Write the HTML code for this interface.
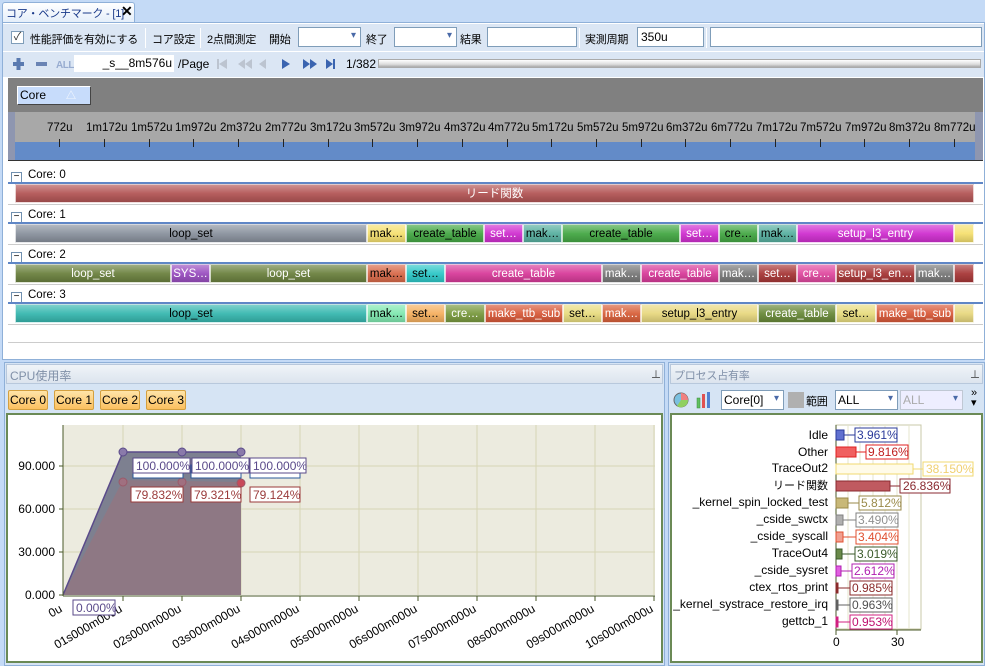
<!DOCTYPE html>
<html><head><meta charset="utf-8"><style>
*{box-sizing:border-box;margin:0;padding:0}
body{width:985px;height:666px;overflow:hidden;background:#c4daf6;font-family:"Liberation Sans","Noto Sans CJK JP",sans-serif;font-size:12px;color:#000;position:relative}
.a{position:absolute}
.j{font-size:11px;letter-spacing:-0.2px}
.bar{position:absolute;height:19px;line-height:19px;text-align:center;font-size:11.5px;overflow:hidden;white-space:nowrap;border:1px solid rgba(255,255,255,.7);background-image:linear-gradient(rgba(255,255,255,.35),rgba(255,255,255,.05) 50%,rgba(0,0,0,.15))}
.w{color:#fff}
.cb{position:absolute;height:20px;background:#fff;border:1px solid #7f9db9}
.cb:after{content:"▾";position:absolute;right:4px;top:2px;font-size:10px;color:#4a6aa8}
.sep{position:absolute;width:1px;background:#a8c0e0;border-right:1px solid #fff}
.ti{position:absolute;top:122px;font-size:11.5px}
.tk{position:absolute;top:139px;width:1px;height:8px;background:#222}
.cl{position:absolute;left:11px;font-size:11.5px}
.cl b{display:inline-block;width:11px;height:11px;border:1px solid #7090b0;background:#fff;font-weight:normal;font-size:10px;line-height:8px;text-align:center;margin-right:6px;vertical-align:-1px}
.hl{position:absolute;left:8px;width:975px;height:2px;background:#5f86c6}
.gl{position:absolute;left:8px;width:975px;height:1px;background:#ccc}
.core{position:absolute;top:390px;width:40px;height:20px;line-height:18px;text-align:center;border:1px solid #d4a040;background:linear-gradient(#ffe4a8,#fbc060);border-radius:2px;font-size:12px}
</style></head><body>
<!-- tab -->
<div class="a" style="left:2px;top:2px;width:133px;height:21px;background:linear-gradient(#fff,#e4eefa);border:1px solid #8fb0d8;border-bottom:none;border-radius:3px 3px 0 0;"></div>
<div class="a j" style="left:6px;top:5px;color:#1a3a8a;white-space:nowrap">コア・ベンチマーク - [1]</div>
<div class="a" style="left:121px;top:3px;font-size:14px;font-weight:bold">✕</div>
<!-- main frame -->
<div class="a" style="left:2px;top:22px;width:983px;height:338px;background:#fff;border:1px solid #8fb0d8"></div>
<!-- toolbar1 -->
<div class="a" style="left:3px;top:24px;width:981px;height:27px;background:#dbe6f4"></div>
<div class="a" style="left:11px;top:31px;width:13px;height:13px;border:1px solid #7f9db9;background:#fff;font-size:11px;line-height:11px;text-align:center;color:#333">✓</div>
<div class="a j" style="left:30px;top:31px">性能評価を有効にする</div>
<div class="sep" style="left:145px;top:28px;height:20px"></div>
<div class="a j" style="left:152px;top:31px">コア設定</div>
<div class="sep" style="left:200px;top:28px;height:20px"></div>
<div class="a j" style="left:207px;top:31px">2点間測定</div>
<div class="a j" style="left:269px;top:31px">開始</div>
<div class="cb" style="left:298px;top:27px;width:63px"></div>
<div class="a j" style="left:366px;top:31px">終了</div>
<div class="cb" style="left:394px;top:27px;width:63px"></div>
<div class="a j" style="left:460px;top:31px">結果</div>
<div class="a" style="left:487px;top:27px;width:90px;height:20px;background:#fff;border:1px solid #7f9db9"></div>
<div class="sep" style="left:579px;top:28px;height:20px"></div>
<div class="a j" style="left:585px;top:31px">実測周期</div>
<div class="a" style="left:637px;top:27px;width:67px;height:20px;background:#fff;border:1px solid #7f9db9;padding:2px 3px;font-size:12px">350u</div>
<div class="sep" style="left:706px;top:28px;height:20px"></div>
<div class="a" style="left:710px;top:27px;width:272px;height:20px;background:#fff;border:1px solid #7f9db9"></div>
<!-- toolbar2 -->
<div class="a" style="left:3px;top:51px;width:981px;height:26px;background:#dbe6f4;border-top:1px solid #fff"></div>
<svg class="a" style="left:10px;top:55px" width="370" height="18">
<rect x="3" y="7" width="11" height="4" fill="#5a7ab0"/><rect x="6.5" y="3" width="4" height="12" fill="#5a7ab0"/>
<rect x="26" y="7" width="11" height="4" fill="#6a84b4"/>
<text x="46" y="13" font-family="Liberation Sans" font-size="10" font-weight="bold" fill="#98acd0" letter-spacing="-0.5">ALL</text>
<g fill="#bcc4d0"><rect x="207" y="4" width="2" height="10"/><path d="M217 4 L209 9 L217 14Z"/><path d="M235 4 L228 9 L235 14Z M242 4 L235 9 L242 14Z"/><path d="M256 4 L249 9 L256 14Z"/></g>
<g fill="#3a64b0"><path d="M272 4 L280 9 L272 14Z"/><path d="M293 4 L300 9 L293 14Z M300 4 L307 9 L300 14Z"/><path d="M316 4 L323 9 L316 14Z"/><rect x="323" y="4" width="2" height="10"/></g>
</svg>
<div class="a" style="left:74px;top:55px;width:100px;height:17px;background:#fff;text-align:right;font-size:12px;line-height:17px;padding-right:2px">_s__8m576u</div>
<div class="a" style="left:178px;top:57px;font-size:12px">/Page</div>
<div class="a" style="left:346px;top:57px;font-size:12px">1/382</div>
<div class="a" style="left:378px;top:59px;width:603px;height:9px;border:1px solid #aaa;background:linear-gradient(#fff,#ddd 60%,#aaa)"></div>
<!-- timeline header -->
<div class="a" style="left:8px;top:78px;width:975px;height:34px;background:#808080"></div>
<div class="a" style="left:17px;top:86px;width:74px;height:19px;background:#c7dcfb;border:1px solid #fff;border-right-color:#444;border-bottom-color:#444;padding-left:2px;line-height:16px;font-size:12px">Core<span style="margin-left:20px;color:#fff;font-size:10px">△</span></div>
<div class="a" style="left:8px;top:112px;width:975px;height:48px;background:#8e96b0"></div>
<div class="a" style="left:15px;top:112px;width:960px;height:30px;background:#a8a8a8"></div>
<div class="a" style="left:15px;top:142px;width:960px;height:18px;background:#638bc8"></div>
<div class="a" style="left:8px;top:160px;width:975px;height:1px;background:#333"></div>
<div class="ti" style="left:47px">772u</div>
<div class="ti" style="left:86px">1m172u</div>
<div class="ti" style="left:131px">1m572u</div>
<div class="ti" style="left:175px">1m972u</div>
<div class="ti" style="left:220px">2m372u</div>
<div class="ti" style="left:265px">2m772u</div>
<div class="ti" style="left:310px">3m172u</div>
<div class="ti" style="left:354px">3m572u</div>
<div class="ti" style="left:399px">3m972u</div>
<div class="ti" style="left:444px">4m372u</div>
<div class="ti" style="left:488px">4m772u</div>
<div class="ti" style="left:532px">5m172u</div>
<div class="ti" style="left:577px">5m572u</div>
<div class="ti" style="left:622px">5m972u</div>
<div class="ti" style="left:666px">6m372u</div>
<div class="ti" style="left:711px">6m772u</div>
<div class="ti" style="left:756px">7m172u</div>
<div class="ti" style="left:800px">7m572u</div>
<div class="ti" style="left:845px">7m972u</div>
<div class="ti" style="left:889px">8m372u</div>
<div class="ti" style="left:934px">8m772u</div>
<div class="tk" style="left:59px"></div><div class="tk" style="left:104px"></div><div class="tk" style="left:149px"></div><div class="tk" style="left:193px"></div><div class="tk" style="left:238px"></div><div class="tk" style="left:283px"></div><div class="tk" style="left:328px"></div><div class="tk" style="left:372px"></div><div class="tk" style="left:417px"></div><div class="tk" style="left:462px"></div><div class="tk" style="left:507px"></div><div class="tk" style="left:551px"></div><div class="tk" style="left:596px"></div><div class="tk" style="left:641px"></div><div class="tk" style="left:685px"></div><div class="tk" style="left:730px"></div><div class="tk" style="left:775px"></div><div class="tk" style="left:820px"></div><div class="tk" style="left:864px"></div><div class="tk" style="left:909px"></div><div class="tk" style="left:954px"></div>
<!-- rows -->
<div class="cl" style="top:169px"><b>−</b>Core: 0</div>
<div class="cl" style="top:209px"><b>−</b>Core: 1</div>
<div class="cl" style="top:249px"><b>−</b>Core: 2</div>
<div class="cl" style="top:289px"><b>−</b>Core: 3</div>
<div class="hl" style="top:182px"></div><div class="hl" style="top:222px"></div><div class="hl" style="top:262px"></div><div class="hl" style="top:302px"></div>
<div class="gl" style="top:204px"></div><div class="gl" style="top:244px"></div><div class="gl" style="top:284px"></div><div class="gl" style="top:324px"></div><div class="gl" style="top:342px"></div>
<div class="bar w" style="left:15px;top:184px;width:959px;background-color:#b35656">リード関数</div>
<!-- core1 -->
<div class="bar" style="left:15px;top:224px;width:352px;background-color:#8a929e">loop_set</div>
<div class="bar" style="left:367px;top:224px;width:39px;background-color:#f5e070">mak…</div>
<div class="bar" style="left:406px;top:224px;width:78px;background-color:#45a845">create_table</div>
<div class="bar w" style="left:484px;top:224px;width:39px;background-color:#d030d0">set…</div>
<div class="bar" style="left:523px;top:224px;width:39px;background-color:#58b0a0">mak…</div>
<div class="bar" style="left:562px;top:224px;width:118px;background-color:#45a845">create_table</div>
<div class="bar w" style="left:680px;top:224px;width:39px;background-color:#d030d0">set…</div>
<div class="bar" style="left:719px;top:224px;width:39px;background-color:#45a845">cre…</div>
<div class="bar" style="left:758px;top:224px;width:39px;background-color:#58b0a0">mak…</div>
<div class="bar w" style="left:797px;top:224px;width:157px;background-color:#d030d0">setup_l3_entry</div>
<div class="bar" style="left:954px;top:224px;width:20px;background-color:#f5e070"></div>
<!-- core2 -->
<div class="bar w" style="left:15px;top:264px;width:156px;background-color:#6c8240">loop_set</div>
<div class="bar w" style="left:171px;top:264px;width:39px;background-color:#9a4fc0">SYS…</div>
<div class="bar w" style="left:210px;top:264px;width:157px;background-color:#6c8240">loop_set</div>
<div class="bar" style="left:367px;top:264px;width:39px;background-color:#d86a4a">mak…</div>
<div class="bar" style="left:406px;top:264px;width:39px;background-color:#2ec8c8">set…</div>
<div class="bar w" style="left:445px;top:264px;width:157px;background-color:#d83c9a">create_table</div>
<div class="bar w" style="left:602px;top:264px;width:39px;background-color:#7a7a7a">mak…</div>
<div class="bar w" style="left:641px;top:264px;width:78px;background-color:#d83c9a">create_table</div>
<div class="bar w" style="left:719px;top:264px;width:39px;background-color:#7a7a7a">mak…</div>
<div class="bar w" style="left:758px;top:264px;width:39px;background-color:#a83838">set…</div>
<div class="bar w" style="left:797px;top:264px;width:39px;background-color:#e04aa0">cre…</div>
<div class="bar w" style="left:836px;top:264px;width:79px;background-color:#a83838">setup_l3_en…</div>
<div class="bar w" style="left:915px;top:264px;width:39px;background-color:#7a7a7a">mak…</div>
<div class="bar" style="left:954px;top:264px;width:20px;background-color:#a83838"></div>
<!-- core3 -->
<div class="bar" style="left:15px;top:304px;width:352px;background-color:#38b8b0">loop_set</div>
<div class="bar" style="left:367px;top:304px;width:39px;background-color:#80e8b0">mak…</div>
<div class="bar" style="left:406px;top:304px;width:39px;background-color:#f5b060">set…</div>
<div class="bar w" style="left:445px;top:304px;width:40px;background-color:#7a9a40">cre…</div>
<div class="bar w" style="left:485px;top:304px;width:78px;background-color:#d85a3a">make_ttb_sub</div>
<div class="bar" style="left:563px;top:304px;width:39px;background-color:#e8dc80">set…</div>
<div class="bar w" style="left:602px;top:304px;width:39px;background-color:#d8603a">mak…</div>
<div class="bar" style="left:641px;top:304px;width:117px;background-color:#e8d880">setup_l3_entry</div>
<div class="bar w" style="left:758px;top:304px;width:78px;background-color:#6a8a3a">create_table</div>
<div class="bar" style="left:836px;top:304px;width:40px;background-color:#e8dc80">set…</div>
<div class="bar w" style="left:876px;top:304px;width:78px;background-color:#d85a3a">make_ttb_sub</div>
<div class="bar" style="left:954px;top:304px;width:20px;background-color:#e8d880"></div>

<!-- bottom left panel -->
<div class="a" style="left:4px;top:362px;width:661px;height:304px;background:#d6e4f4;border:1px solid #8fb0d8"></div>
<div class="a" style="left:6px;top:364px;width:657px;height:20px;background:linear-gradient(#f0f4f8,#dce4ee);border:1px solid #b8c8dc;color:#8090a8;padding:2px 3px;font-size:12px">CPU使用率</div>
<div class="a" style="left:651px;top:366px;font-size:10px;color:#333">⊥</div>
<div class="core" style="left:8px">Core 0</div>
<div class="core" style="left:54px">Core 1</div>
<div class="core" style="left:100px">Core 2</div>
<div class="core" style="left:146px">Core 3</div>
<div class="a" style="left:6px;top:413px;width:657px;height:250px;background:#fff;border:2px solid #6b8a56"></div>
<svg class="a" style="left:0;top:0" width="665" height="666" font-family="Liberation Sans, sans-serif" font-size="12">
<rect x="63" y="425" width="592" height="170" fill="#ecebdf"/>
<g stroke="#d6d6b4" stroke-width="1">
<line x1="63" y1="466" x2="655" y2="466"/><line x1="63" y1="509" x2="655" y2="509"/><line x1="63" y1="552" x2="655" y2="552"/>
<line x1="123" y1="425" x2="123" y2="595"/><line x1="182" y1="425" x2="182" y2="595"/><line x1="241" y1="425" x2="241" y2="595"/><line x1="300" y1="425" x2="300" y2="595"/><line x1="359" y1="425" x2="359" y2="595"/><line x1="418" y1="425" x2="418" y2="595"/><line x1="477" y1="425" x2="477" y2="595"/><line x1="536" y1="425" x2="536" y2="595"/><line x1="595" y1="425" x2="595" y2="595"/><line x1="654" y1="425" x2="654" y2="595"/>
</g>
<polygon points="63,595 123,452 241,452 241,595" fill="#7d8090"/>
<polygon points="63,595 123,480 182,481 241,482 241,595" fill="#8e7884"/>
<polyline points="63,595 123,452 241,452" fill="none" stroke="#5a4a8a" stroke-width="1.5"/>
<g fill="#8a7aaa" stroke="#5a4a8a"><circle cx="123" cy="452" r="4"/><circle cx="182" cy="452" r="4"/><circle cx="241" cy="452" r="4"/></g>
<g fill="#a07080" stroke="#9a5a6a"><circle cx="123" cy="482" r="4"/><circle cx="182" cy="482" r="4"/><circle cx="241" cy="483" r="4" fill="#c84a5a"/></g>
<line x1="63" y1="425" x2="63" y2="596" stroke="#4a5a2a"/><line x1="63" y1="596" x2="655" y2="596" stroke="#4a5a2a"/>
<g stroke="#4a5a2a">
<line x1="59" y1="466" x2="63" y2="466"/><line x1="59" y1="509" x2="63" y2="509"/><line x1="59" y1="552" x2="63" y2="552"/><line x1="59" y1="595" x2="63" y2="595"/>
<line x1="123" y1="596" x2="123" y2="601"/><line x1="182" y1="596" x2="182" y2="601"/><line x1="241" y1="596" x2="241" y2="601"/><line x1="300" y1="596" x2="300" y2="601"/><line x1="359" y1="596" x2="359" y2="601"/><line x1="418" y1="596" x2="418" y2="601"/><line x1="477" y1="596" x2="477" y2="601"/><line x1="536" y1="596" x2="536" y2="601"/><line x1="595" y1="596" x2="595" y2="601"/><line x1="654" y1="596" x2="654" y2="601"/>
</g>
<g text-anchor="end" fill="#000"><text x="55" y="470">90.000</text><text x="55" y="513">60.000</text><text x="55" y="556">30.000</text><text x="55" y="599">0.000</text></g>
<g text-anchor="end" fill="#000">
<text transform="translate(63,611) rotate(-30)">0u</text>
<text transform="translate(123,611) rotate(-30)">01s000m000u</text>
<text transform="translate(182,611) rotate(-30)">02s000m000u</text>
<text transform="translate(241,611) rotate(-30)">03s000m000u</text>
<text transform="translate(300,611) rotate(-30)">04s000m000u</text>
<text transform="translate(359,611) rotate(-30)">05s000m000u</text>
<text transform="translate(418,611) rotate(-30)">06s000m000u</text>
<text transform="translate(477,611) rotate(-30)">07s000m000u</text>
<text transform="translate(536,611) rotate(-30)">08s000m000u</text>
<text transform="translate(595,611) rotate(-30)">09s000m000u</text>
<text transform="translate(654,611) rotate(-30)">10s000m000u</text>
</g>
<g font-size="12">
<rect x="133" y="465" width="50" height="13" fill="#fff" stroke="#2a5a9a"/><rect x="191" y="465" width="50" height="13" fill="#fff" stroke="#2a5a9a"/><rect x="250" y="465" width="50" height="13" fill="#fff" stroke="#2a5a9a"/>
<rect x="133" y="458" width="57" height="15" fill="#fff" stroke="#5a4a8a"/><text x="136" y="470" fill="#5a4a8a">100.000%</text>
<rect x="192" y="458" width="57" height="15" fill="#fff" stroke="#5a4a8a"/><text x="195" y="470" fill="#5a4a8a">100.000%</text>
<rect x="250" y="458" width="56" height="15" fill="#fff" stroke="#5a4a8a"/><text x="253" y="470" fill="#5a4a8a">100.000%</text>
<rect x="131" y="487" width="52" height="15" fill="#fff" stroke="#9a3a3a"/><text x="135" y="499" fill="#9a3a3a">79.832%</text>
<rect x="191" y="487" width="50" height="15" fill="#fff" stroke="#9a3a3a"/><text x="194" y="499" fill="#9a3a3a">79.321%</text>
<rect x="250" y="487" width="50" height="15" fill="#fff" stroke="#9a3a3a"/><text x="253" y="499" fill="#9a3a3a">79.124%</text>
<rect x="73" y="600" width="42" height="15" fill="#fff" stroke="#5a4a8a"/><text x="76" y="612" fill="#5a4a8a">0.000%</text>
</g>
</svg>

<!-- bottom right panel -->
<div class="a" style="left:668px;top:362px;width:317px;height:304px;background:#d6e4f4;border:1px solid #8fb0d8"></div>
<div class="a" style="left:670px;top:364px;width:313px;height:20px;background:linear-gradient(#f0f4f8,#dce4ee);border:1px solid #b8c8dc;color:#8090a8;padding:2px 3px" ><span class="j">プロセス占有率</span></div>
<div class="a" style="left:970px;top:366px;font-size:10px;color:#333">⊥</div>
<svg class="a" style="left:673px;top:391px" width="40" height="18">
<circle cx="8" cy="9" r="7" fill="#7ac0e0" stroke="#666"/><path d="M8 9 L8 2 A7 7 0 0 1 15 9Z" fill="#f08080"/><path d="M8 9 L15 9 A7 7 0 0 1 4 15Z" fill="#90d060"/>
<rect x="24" y="7" width="3" height="10" fill="#60c060" stroke="#3a8a3a" stroke-width=".5"/><rect x="29" y="3" width="3" height="14" fill="#e05050"/><rect x="34" y="1" width="3" height="16" fill="#5080d0"/>
</svg>
<div class="cb" style="left:721px;top:390px;width:63px;padding:2px 2px;font-size:12px">Core[0]</div>
<div class="a" style="left:788px;top:392px;width:16px;height:16px;background:#b0b0b0"></div>
<div class="a j" style="left:806px;top:393px">範囲</div>
<div class="cb" style="left:835px;top:390px;width:63px;padding:2px 2px;font-size:12px">ALL</div>
<div class="cb" style="left:900px;top:390px;width:63px;padding:2px 2px;font-size:12px;color:#aaa;background:#eef;border-color:#c0c8d4">ALL</div>
<div class="a" style="left:971px;top:388px;font-size:11px;line-height:10px">»<br>▾</div>
<div class="a" style="left:670px;top:413px;width:313px;height:250px;background:#fff;border:2px solid #6b8a56"></div>
<svg class="a" style="left:670px;top:413px" width="313" height="250" font-family="Liberation Sans, Noto Sans CJK JP, sans-serif" font-size="12">
<g transform="translate(-670,-413)">
<rect x="836" y="425" width="85" height="204" fill="#fff" stroke="#c8c8a8"/>
<g stroke="#e4e4cc"><line x1="848" y1="425" x2="848" y2="629"/><line x1="860" y1="425" x2="860" y2="629"/><line x1="873" y1="425" x2="873" y2="629"/><line x1="885" y1="425" x2="885" y2="629"/><line x1="897" y1="425" x2="897" y2="629"/><line x1="909" y1="425" x2="909" y2="629"/></g>
<line x1="836" y1="425" x2="836" y2="630" stroke="#4a5a2a"/><line x1="836" y1="630" x2="921" y2="630" stroke="#4a5a2a"/>
<g text-anchor="end" fill="#000">
<text x="828" y="439">Idle</text><text x="828" y="456">Other</text><text x="828" y="472">TraceOut2</text><text x="828" y="489" font-size="11">リード関数</text><text x="828" y="506">_kernel_spin_locked_test</text><text x="828" y="523">_cside_swctx</text><text x="828" y="540">_cside_syscall</text><text x="828" y="557">TraceOut4</text><text x="828" y="574">_cside_sysret</text><text x="828" y="591">ctex_rtos_print</text><text x="828" y="608">_kernel_systrace_restore_irq</text><text x="828" y="625">gettcb_1</text>
</g>
<g stroke-width="1">
<rect x="836" y="430" width="8" height="10" fill="#6070d0" stroke="#2a3a9a"/><line x1="844" y1="435" x2="855" y2="435" stroke="#2a3a9a"/><rect x="855" y="428" width="42" height="14" fill="#fff" stroke="#2a3a9a"/><text x="857" y="439" fill="#2a3a9a">3.961%</text>
<rect x="836" y="447" width="20" height="10" fill="#f06060" stroke="#e02020"/><line x1="856" y1="452" x2="866" y2="452" stroke="#e02020"/><rect x="866" y="445" width="42" height="14" fill="#fff" stroke="#e02020"/><text x="868" y="456" fill="#c02020">9.816%</text>
<rect x="836" y="464" width="77" height="10" fill="#fffbe8" stroke="#f0d870"/><line x1="913" y1="469" x2="923" y2="469" stroke="#f0d870"/><rect x="923" y="462" width="50" height="14" fill="#fff" stroke="#f0d870"/><text x="926" y="473" fill="#f0d070">38.150%</text>
<rect x="836" y="481" width="54" height="10" fill="#c05a60" stroke="#8a2a30"/><line x1="890" y1="486" x2="900" y2="486" stroke="#8a2a30"/><rect x="900" y="479" width="50" height="14" fill="#fff" stroke="#8a2a30"/><text x="903" y="490" fill="#8a2a30">26.836%</text>
<rect x="836" y="498" width="12" height="10" fill="#c8b878" stroke="#9a8a4a"/><line x1="848" y1="503" x2="859" y2="503" stroke="#9a8a4a"/><rect x="859" y="496" width="42" height="14" fill="#fff" stroke="#9a8a4a"/><text x="861" y="507" fill="#9a8a4a">5.812%</text>
<rect x="836" y="515" width="7" height="10" fill="#b0b0b0" stroke="#808080"/><line x1="843" y1="520" x2="856" y2="520" stroke="#808080"/><rect x="856" y="513" width="42" height="14" fill="#fff" stroke="#808080"/><text x="858" y="524" fill="#909090">3.490%</text>
<rect x="836" y="532" width="7" height="10" fill="#f0a090" stroke="#e05030"/><line x1="843" y1="537" x2="856" y2="537" stroke="#e05030"/><rect x="856" y="530" width="42" height="14" fill="#fff" stroke="#e05030"/><text x="858" y="541" fill="#e05030">3.404%</text>
<rect x="836" y="549" width="6" height="10" fill="#6a8a4a" stroke="#3a5a2a"/><line x1="842" y1="554" x2="855" y2="554" stroke="#3a5a2a"/><rect x="855" y="547" width="42" height="14" fill="#fff" stroke="#3a5a2a"/><text x="857" y="558" fill="#3a5a2a">3.019%</text>
<rect x="836" y="566" width="5" height="10" fill="#e060e0" stroke="#b020b0"/><line x1="841" y1="571" x2="852" y2="571" stroke="#b020b0"/><rect x="852" y="564" width="42" height="14" fill="#fff" stroke="#b020b0"/><text x="854" y="575" fill="#b020b0">2.612%</text>
<rect x="836" y="583" width="2" height="10" fill="#8a2a2a" stroke="#8a2a2a"/><line x1="838" y1="588" x2="850" y2="588" stroke="#8a2a2a"/><rect x="850" y="581" width="42" height="14" fill="#fff" stroke="#8a2a2a"/><text x="852" y="592" fill="#8a2a2a">0.985%</text>
<rect x="836" y="600" width="2" height="10" fill="#606060" stroke="#606060"/><line x1="838" y1="605" x2="850" y2="605" stroke="#606060"/><rect x="850" y="598" width="42" height="14" fill="#fff" stroke="#606060"/><text x="852" y="609" fill="#505050">0.963%</text>
<rect x="836" y="617" width="2" height="10" fill="#d02080" stroke="#d02080"/><line x1="838" y1="622" x2="850" y2="622" stroke="#d02080"/><rect x="850" y="615" width="42" height="14" fill="#fff" stroke="#d02080"/><text x="852" y="626" fill="#c01070">0.953%</text>
</g>
<g stroke="#4a5a2a"><line x1="836" y1="630" x2="836" y2="635"/><line x1="897" y1="630" x2="897" y2="635"/></g>
<text x="833" y="646" fill="#000">0</text><text x="891" y="646" fill="#000">30</text>
</g>
</svg>
</body></html>
